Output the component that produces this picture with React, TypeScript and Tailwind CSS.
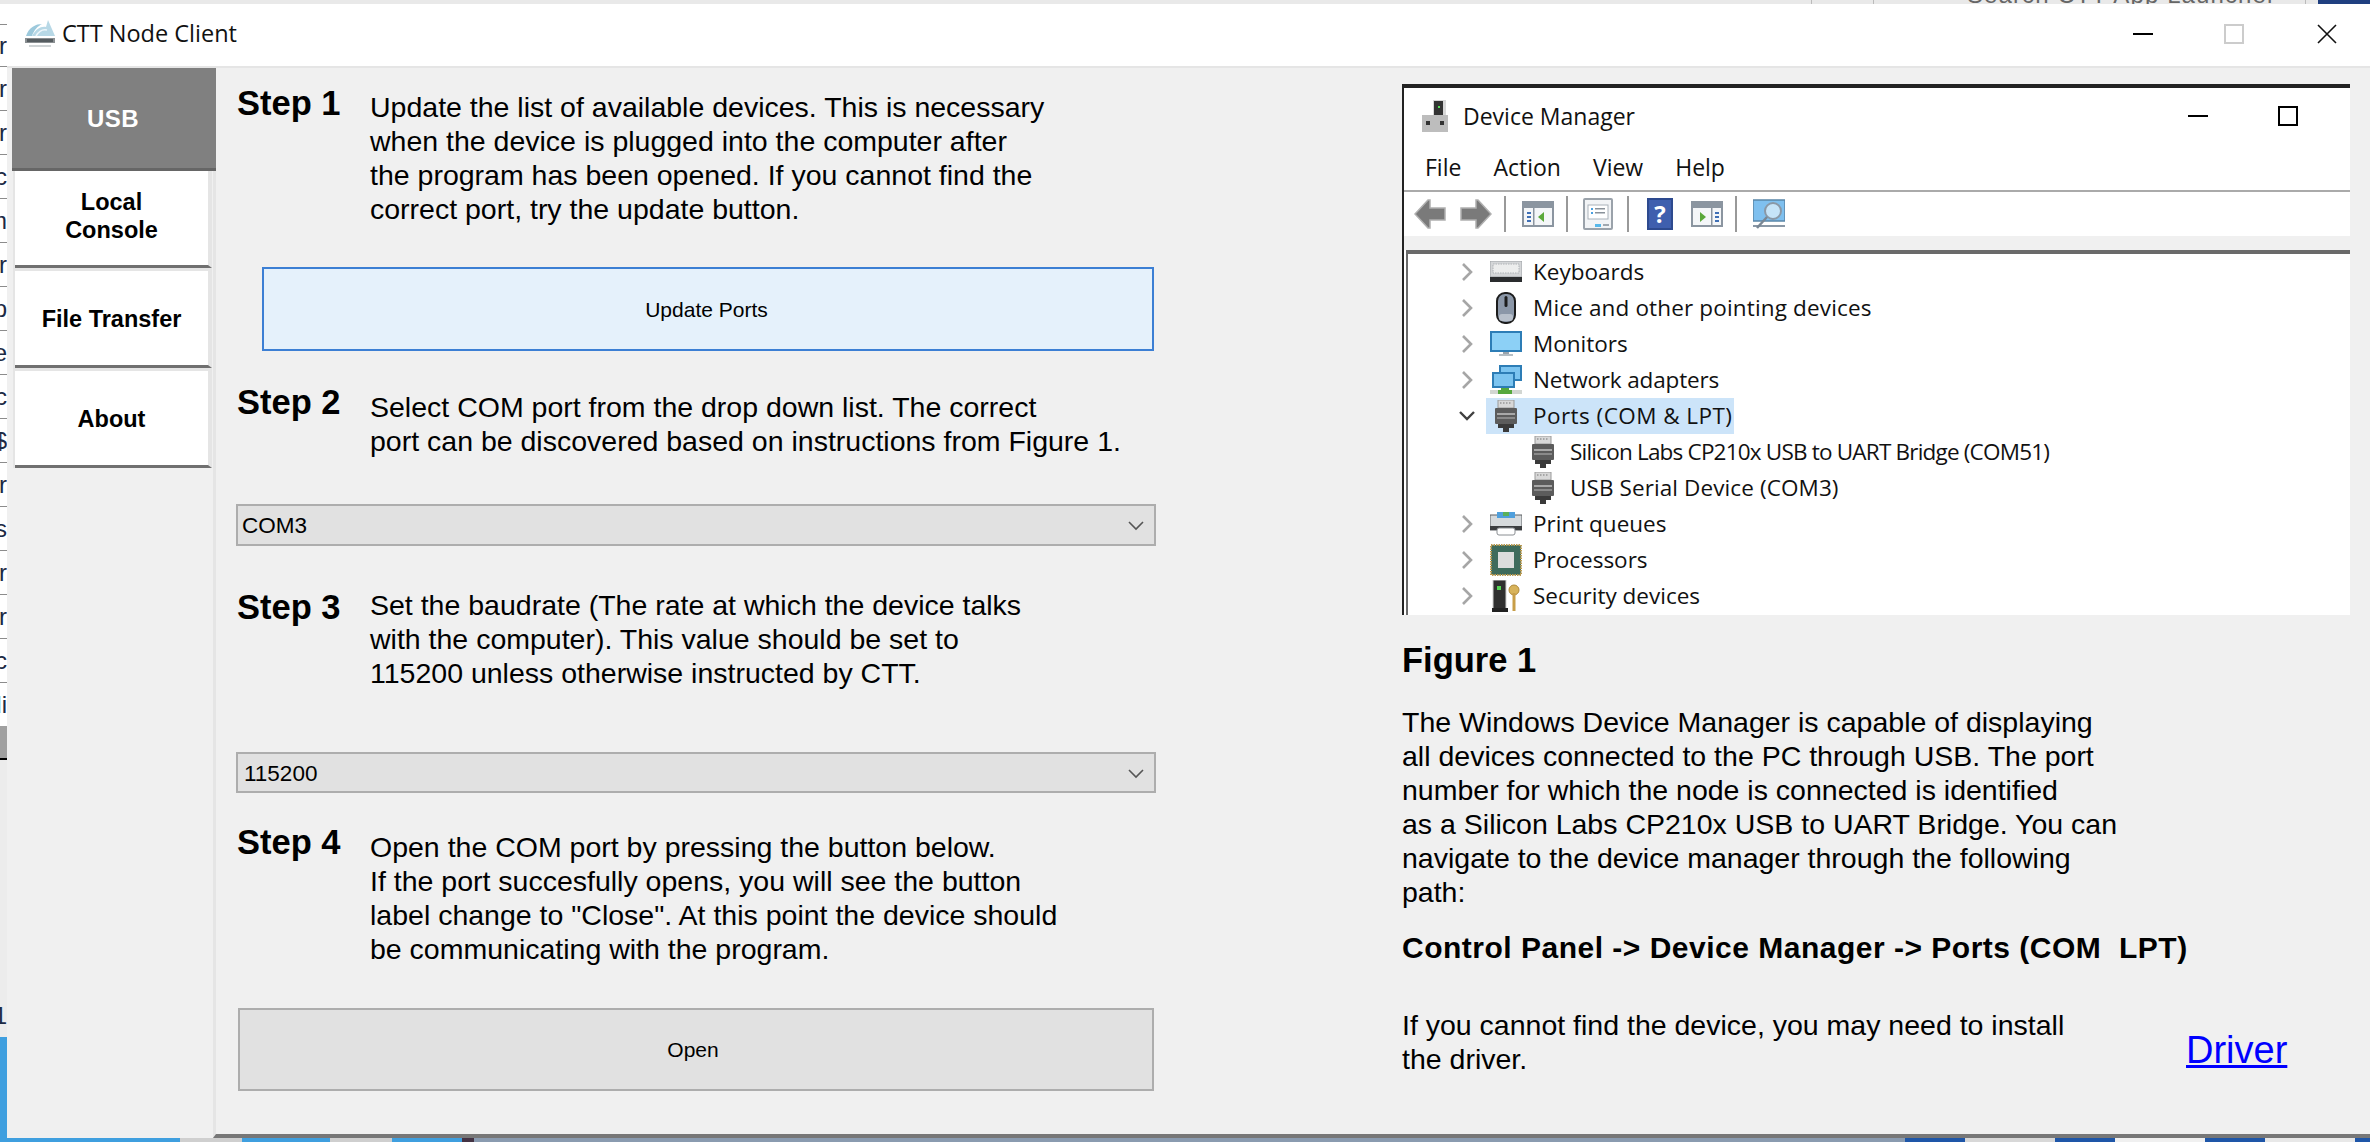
import React from "react";

const stripRows = [
  { t: "ar", c: "h-[42px]" }, { t: "or", c: "h-[44px]" }, { t: "or", c: "h-[44px]" }, { t: "c", c: "h-[44px]" },
  { t: "m", c: "h-[44px]" }, { t: "r", c: "h-[44px]" }, { t: "p", c: "h-[44px]" }, { t: "e", c: "h-[44px]" },
  { t: "c", c: "h-[44px]" }, { t: "a$", c: "h-[44px]" }, { t: "r", c: "h-[44px]" }, { t: "Es", c: "h-[44px]" },
  { t: "ar", c: "h-[44px]" }, { t: "or", c: "h-[44px]" }, { t: "Tc", c: "h-[44px]" },
];

function LeftStrip() {
  return (
    <div className="flex h-full w-[7px] shrink-0 flex-col overflow-hidden bg-white text-[24px] leading-[30px] text-[#1c2a44]">
      <div className="h-[21px] shrink-0 border-b border-[#8c8c8c]" />
      {stripRows.map((r, i) => (
        <div key={i} className={`flex shrink-0 items-center justify-end overflow-hidden whitespace-nowrap border-b border-[#8c8c8c] ${r.c}`}>
          {r.t}
        </div>
      ))}
      <div className="flex h-[43px] shrink-0 items-center justify-end overflow-hidden">di</div>
      <div className="h-[34px] shrink-0 border-b-2 border-black bg-[#a0a0a0]" />
      <div className="flex h-[277px] shrink-0 items-end justify-end overflow-hidden bg-[#ececec] pb-[6px]">1</div>
      <div className="flex-1 bg-[#3f9fdf]" />
    </div>
  );
}

function TopStrip() {
  return (
    <div className="flex h-[4px] w-full shrink-0 items-end overflow-hidden bg-[#e9e9e9]">
      <div className="h-full w-[1811px] shrink-0" />
      <div className="h-full w-px shrink-0 bg-[#bbbbbb]" />
      <div className="h-full w-[61px] shrink-0" />
      <div className="h-full w-px shrink-0 bg-[#bbbbbb]" />
      <div className="h-[30px] w-[431px] shrink-0 translate-y-[6px] whitespace-nowrap pl-[93px] text-[24px] leading-[30px] tracking-[1.1px] text-[#666666]">
        Search CTT App Launcher
      </div>
      <div className="h-full w-px shrink-0 bg-[#bbbbbb]" />
      <div className="h-full w-[12px] shrink-0" />
      <div className="h-full flex-1 bg-[#1f3f80]" />
    </div>
  );
}

const bottomSegs = [
  "w-[180px] bg-[#3f9fdf]", "w-[62px] bg-[#cfcfcf]", "w-[88px] bg-[#3f9fdf]", "w-[62px] bg-[#cfcfcf]",
  "w-[70px] bg-[#3f9fdf]", "w-[12px] bg-[#443344]", "w-[1431px] bg-[#8a9bb0]", "w-[60px] bg-[#1e56a8]",
  "w-[90px] bg-[#d8d8d8]", "w-[60px] bg-[#1e56a8]", "w-[90px] bg-[#f0f0f0]", "w-[60px] bg-[#1e56a8]",
  "w-[90px] bg-[#e8e8e8]", "w-[15px] bg-[#1e56a8]",
];

function BottomStrip() {
  return (
    <div className="flex h-[4px] w-full shrink-0 overflow-hidden">
      {bottomSegs.map((s, i) => (
        <div key={i} className={`h-full shrink-0 ${s}`} />
      ))}
    </div>
  );
}

function Logo() {
  return (
    <svg width="32" height="30" viewBox="0 0 32 30" className="shrink-0">
      <path d="M2 17 C5 8 12 5 18 5 C14 7 10 11 8 17 Z" fill="#9cc9dc" />
      <path d="M8 17 C12 10 17 7 22 8 L24 1 L31 17 Z" fill="#b7d8e6" />
      <path d="M12 17 C15 12 19 10 23 11" stroke="#eef6fa" strokeWidth="1.6" fill="none" />
      <rect x="1" y="19" width="30" height="5" fill="#8a8f92" />
      <rect x="3" y="20" width="26" height="3" fill="#555c60" />
      <rect x="5" y="26" width="22" height="2" fill="#cfd4d6" />
    </svg>
  );
}

function TitleBar() {
  return (
    <div className="flex h-[64px] shrink-0 items-center border-b-2 border-[#e5e5e5] bg-white pl-[17px] pb-[2px]">
      <Logo />
      <span className="ml-[6px] whitespace-nowrap [font-family:'Open_Sans',sans-serif] text-[23.5px] text-[#111111]">CTT Node Client</span>
      <div className="flex-1" />
      <div className="h-[2px] w-[20px] bg-black" />
      <div className="ml-[71px] h-[20px] w-[20px] border-2 border-[#cccccc]" />
      <svg width="20" height="20" viewBox="0 0 20 20" className="ml-[73px] mr-[33px]">
        <path d="M1 1 L19 19 M19 1 L1 19" stroke="#111" strokeWidth="1.6" />
      </svg>
    </div>
  );
}

function Sidebar() {
  const tab = "flex h-[97px] w-[197px] shrink-0 flex-col items-center justify-center border-b-[3px] border-r-4 border-[#e5e5e5] border-b-[#707070] bg-white text-center text-[23.5px] font-bold leading-[28px] text-black";
  return (
    <div className="flex w-[206px] shrink-0 flex-col bg-[#f0f0f0]">
      <div className="relative z-10 ml-[5px] flex h-[103px] w-[204px] shrink-0 items-center justify-center border-b-[3px] border-[#666666] bg-[#808080] pt-[2px] pr-[2px] text-[24px] font-bold tracking-[0.5px] text-white">
        USB
      </div>
      <div className="ml-[6px] flex w-[199px] flex-col gap-[3px] border-l-2 border-[#e5e5e5] bg-[#e5e5e5]">
        <div className={`${tab} pb-[4px]`}>
          <span>Local</span>
          <span>Console</span>
        </div>
        <div className={`${tab} pt-[2px]`}>File Transfer</div>
        <div className={`${tab} pt-[2px]`}>About</div>
      </div>
    </div>
  );
}

function Title({ children, className }: { children: React.ReactNode; className: string }) {
  return <div className={`ml-[1px] w-[133px] shrink-0 whitespace-nowrap text-[34.5px] font-bold leading-[34px] ${className}`}>{children}</div>;
}

function Lines({ lines, className = "" }: { lines: string[]; className?: string }) {
  return (
    <div className={`whitespace-nowrap text-[28.5px] leading-[34px] ${className}`}>
      {lines.map((l, i) => (
        <div key={i}>{l}</div>
      ))}
    </div>
  );
}

function Combo({ value, className }: { value: string; className: string }) {
  return (
    <div className={`ml-[20px] flex w-[920px] items-center justify-between border-2 border-[#adadad] bg-[#e1e1e1] pr-[10px] pt-[2px] text-[22.5px] text-black ${className}`}>
      <span>{value}</span>
      <svg width="16" height="10" viewBox="0 0 16 10">
        <path d="M1 1 L8 8 L15 1" stroke="#555" strokeWidth="1.6" fill="none" />
      </svg>
    </div>
  );
}

function Steps() {
  return (
    <div className="flex w-[1186px] shrink-0 flex-col">
      <div className="mt-[22px] flex pl-[20px]">
        <Title className="-mt-[4px]">Step 1</Title>
        <Lines lines={["Update the list of available devices. This is necessary", "when the device is plugged into the computer after", "the program has been opened. If you cannot find the", "correct port, try the update button."]} />
      </div>
      <div className="ml-[46px] mt-[41px] flex h-[84px] w-[892px] items-center justify-center border-2 border-[#3c7fd4] bg-[#e5f1fb] pt-[2px] pr-[3px] text-[21px] text-black">
        Update Ports
      </div>
      <div className="mt-[39px] flex pl-[20px]">
        <Title className="-mt-[5px]">Step 2</Title>
        <Lines lines={["Select COM port from the drop down list. The correct", "port can be discovered based on instructions from Figure 1."]} />
      </div>
      <Combo value="COM3" className="mt-[46px] h-[42px] pl-[4px]" />
      <div className="mt-[42px] flex pl-[20px]">
        <Title className="mt-[2px]">Step 3</Title>
        <Lines className="leading-[34.5px]" lines={["Set the baudrate (The rate at which the device talks", "with the computer). This value should be set to", "115200 unless otherwise instructed by CTT."]} />
      </div>
      <Combo value="115200" className="mt-[62px] h-[41px] pl-[6px]" />
      <div className="mt-[37px] flex pl-[20px]">
        <Title className="-mt-[5px]">Step 4</Title>
        <Lines lines={["Open the COM port by pressing the button below.", "If the port succesfully opens, you will see the button", "label change to \"Close\". At this point the device should", "be communicating with the program."]} />
      </div>
      <div className="ml-[22px] mt-[42px] flex h-[83px] w-[916px] items-center justify-center border-2 border-[#adadad] bg-[#e1e1e1] pr-[6px] text-[21px] text-black">
        Open
      </div>
    </div>
  );
}

/* ---------- device manager drawings ---------- */
function DevMgrIcon() {
  return (
    <svg width="26" height="32" viewBox="0 0 26 32" className="shrink-0">
      <rect x="11" y="0" width="13" height="15" fill="#d8d8d8" />
      <rect x="12" y="1" width="9" height="14" fill="#333" />
      <rect x="16" y="6" width="2" height="2" fill="#55e055" />
      <rect x="0" y="15" width="26" height="17" fill="#bdbdbd" />
      <rect x="4" y="21" width="4" height="4" fill="#333" />
      <rect x="18" y="21" width="4" height="4" fill="#333" />
    </svg>
  );
}

function ArrowIcon({ dir }: { dir: "l" | "r" }) {
  return (
    <svg width="32" height="30" viewBox="0 0 32 30" className={`shrink-0 ${dir === "r" ? "rotate-180" : ""}`}>
      <path d="M1 15 L14 1 L16 1 L16 9 L31 9 L31 21 L16 21 L16 29 L14 29 Z" fill="#7a7a7a" stroke="#b0b0b0" strokeWidth="1.5" />
    </svg>
  );
}

function Sep({ className }: { className: string }) {
  return <div className={`h-[36px] w-[2px] shrink-0 bg-[#999999] ${className}`} />;
}

function PaneIcon({ flip, className }: { flip?: boolean; className: string }) {
  return (
    <svg width="32" height="26" viewBox="0 0 32 26" className={`shrink-0 ${className}`}>
      <rect x="1" y="1" width="30" height="24" fill="#f4f6f8" stroke="#8b95a0" strokeWidth="2" />
      <rect x="1" y="1" width="30" height="6" fill="#8b95a0" />
      <rect x={flip ? 20 : 11} y="7" width="1.5" height="18" fill="#8b95a0" />
      <rect x={flip ? 24 : 5} y="11" width="4" height="2" fill="#3f6fb5" />
      <rect x={flip ? 24 : 5} y="15" width="4" height="2" fill="#3f6fb5" />
      <rect x={flip ? 24 : 5} y="19" width="4" height="2" fill="#3f6fb5" />
      {flip ? <path d="M9 11 L15 16 L9 21 Z" fill="#5aa83a" /> : <path d="M22 11 L16 16 L22 21 Z" fill="#5aa83a" />}
    </svg>
  );
}

function PropIcon({ className }: { className: string }) {
  return (
    <svg width="30" height="32" viewBox="0 0 30 32" className={`shrink-0 ${className}`}>
      <rect x="1" y="1" width="28" height="30" rx="1" fill="#f2f4f6" stroke="#9aa2aa" strokeWidth="2" />
      <rect x="5" y="7" width="20" height="14" fill="#fff" stroke="#aab2ba" />
      <rect x="8" y="10" width="2" height="2" fill="#4aa0e0" />
      <rect x="12" y="10" width="10" height="1.5" fill="#8a929a" />
      <rect x="8" y="14" width="2" height="2" fill="#4aa0e0" />
      <rect x="12" y="14" width="10" height="1.5" fill="#8a929a" />
      <rect x="12" y="26" width="6" height="3" fill="#58b8ea" />
      <rect x="20" y="26" width="6" height="2" fill="#a0a8b0" />
    </svg>
  );
}

function HelpIcon({ className }: { className: string }) {
  return (
    <div className={`flex h-[32px] w-[26px] shrink-0 items-center justify-center border-2 border-[#2d4a8f] bg-[#3f5fae] text-[24px] font-bold leading-none text-white ${className}`}>
      ?
    </div>
  );
}

function ScanIcon({ className }: { className: string }) {
  return (
    <svg width="32" height="30" viewBox="0 0 32 30" className={`shrink-0 ${className}`}>
      <rect x="0" y="1" width="32" height="21" fill="#7fc0ef" stroke="#5a86a8" strokeWidth="1.5" />
      <rect x="0" y="26" width="32" height="2" fill="#8a98a6" />
      <circle cx="20" cy="12" r="8" fill="#c6e4f8" stroke="#8a98a6" strokeWidth="2" />
      <path d="M14 18 L4 29" stroke="#7a8794" strokeWidth="2.5" />
    </svg>
  );
}

function KeyboardIcon() {
  return (
    <svg width="32" height="22" viewBox="0 0 32 22">
      <rect x="0" y="0" width="32" height="16" fill="#d4d6d8" stroke="#9ea2a6" />
      <rect x="3" y="3" width="26" height="9" fill="#eceded" stroke="#aeb2b6" strokeDasharray="1.5 1" />
      <rect x="0" y="16" width="32" height="5" fill="#2a2c2e" />
    </svg>
  );
}
function MouseIcon() {
  return (
    <svg width="20" height="32" viewBox="0 0 20 32">
      <rect x="1" y="1" width="18" height="30" rx="8" fill="#8b97a8" stroke="#1c1c1c" strokeWidth="2" />
      <rect x="8.5" y="4" width="3" height="11" rx="1.5" fill="#1c1c1c" />
      <rect x="3" y="22" width="14" height="7" rx="3" fill="#b8c0cb" />
    </svg>
  );
}
function MonitorIcon() {
  return (
    <svg width="32" height="26" viewBox="0 0 32 26">
      <rect x="1" y="1" width="30" height="19" fill="#8cd0f6" stroke="#2d7db6" strokeWidth="2" />
      <rect x="13" y="21" width="6" height="2" fill="#9aa4ac" />
      <rect x="9" y="23" width="14" height="2" fill="#b6bec4" />
    </svg>
  );
}
function NetworkIcon() {
  return (
    <svg width="32" height="30" viewBox="0 0 32 30">
      <rect x="10" y="1" width="21" height="14" fill="#7cc4f0" stroke="#2d7db6" strokeWidth="2" />
      <rect x="3" y="8" width="21" height="14" fill="#7cc4f0" stroke="#2d7db6" strokeWidth="2" />
      <rect x="0" y="25" width="32" height="4" fill="#d2d6d2" />
      <path d="M11 23 H19 V25 H22 V29 H8 V25 H11 Z" fill="#55a83e" />
    </svg>
  );
}
function PortIcon() {
  return (
    <svg width="22" height="32" viewBox="0 0 22 32" className="shrink-0">
      <rect x="3" y="0" width="16" height="8" fill="#d8d8d8" stroke="#9a9a9a" />
      <path d="M5 3 H17" stroke="#777" strokeDasharray="1.5 1.5" />
      <rect x="0" y="8" width="22" height="16" rx="1" fill="#5c5c5c" />
      <rect x="2" y="13" width="18" height="2" fill="#a8a8a8" />
      <rect x="2" y="17" width="18" height="2" fill="#8a8a8a" />
      <rect x="3" y="24" width="5" height="4" fill="#3a3a3a" />
      <rect x="14" y="24" width="5" height="4" fill="#3a3a3a" />
      <rect x="8" y="24" width="6" height="8" fill="#3a3a3a" />
    </svg>
  );
}
function PrinterIcon() {
  return (
    <svg width="32" height="24" viewBox="0 0 32 24">
      <rect x="0" y="3" width="32" height="15" fill="#d6dadc" stroke="#5a5e62" />
      <rect x="7" y="0" width="18" height="6" fill="#4f9fdc" />
      <rect x="13" y="0" width="6" height="4" fill="#5ab05a" />
      <rect x="0" y="14" width="32" height="4" fill="#3c3e40" />
      <rect x="7" y="16" width="18" height="7" rx="2" fill="#fff" stroke="#8a8e92" />
    </svg>
  );
}
function CpuIcon() {
  return (
    <svg width="32" height="32" viewBox="0 0 32 32">
      <rect x="1" y="1" width="30" height="30" fill="#3e6b5c" stroke="#b89a52" strokeWidth="2" strokeDasharray="1.5 1" />
      <rect x="3" y="3" width="26" height="26" fill="#3e6b5c" />
      <rect x="8" y="8" width="16" height="16" fill="#dcdcdc" />
    </svg>
  );
}
function SecurityIcon() {
  return (
    <svg width="28" height="32" viewBox="0 0 28 32">
      <rect x="1" y="0" width="13" height="29" fill="#2f2f2f" stroke="#cfcfcf" />
      <rect x="5" y="6" width="4" height="4" fill="#54d454" />
      <rect x="0" y="28" width="16" height="4" fill="#222" />
      <circle cx="22" cy="10" r="5" fill="#d8b35a" stroke="#b08a3a" />
      <rect x="20.5" y="13" width="3" height="18" fill="#c89e48" />
    </svg>
  );
}

function Chevron({ open }: { open?: boolean }) {
  return open ? (
    <svg width="18" height="12" viewBox="0 0 18 12">
      <path d="M2 2 L9 9 L16 2" stroke="#404040" strokeWidth="2.4" fill="none" />
    </svg>
  ) : (
    <svg width="13" height="20" viewBox="0 0 13 20">
      <path d="M2 2 L10 10 L2 18" stroke="#a6a6a6" strokeWidth="2.6" fill="none" />
    </svg>
  );
}

function TreeRow({ icon, label, selected, open, className = "" }: { icon: React.ReactNode; label: string; selected?: boolean; open?: boolean; className?: string }) {
  return (
    <div className="flex h-[36px] shrink-0 items-center pl-[50px]">
      <div className="flex w-[18px] shrink-0 justify-center"><Chevron open={open} /></div>
      <div className={`ml-[10px] flex h-[36px] items-center pl-[3px] pr-[2px] ${selected ? "bg-[#cce4f9]" : ""}`}>
        <div className="flex w-[33px] shrink-0 justify-center">{icon}</div>
        <span className={`ml-[11px] whitespace-nowrap ${className}`}>{label}</span>
      </div>
    </div>
  );
}

function ChildRow({ label, className = "" }: { label: string; className?: string }) {
  return (
    <div className="flex h-[36px] shrink-0 items-center pl-[124px]">
      <PortIcon />
      <span className={`ml-[16px] whitespace-nowrap ${className}`}>{label}</span>
    </div>
  );
}

function DeviceManager() {
  return (
    <div className="mt-[16px] flex h-[531px] flex-col overflow-hidden border-l-2 border-t-4 border-[#222222] bg-white [font-family:'Open_Sans',sans-serif] text-[22.5px] text-[#111111]">
      <div className="flex h-[56px] shrink-0 items-center pl-[18px]">
        <DevMgrIcon />
        <span className="ml-[15px] whitespace-nowrap text-[23px]">Device Manager</span>
        <div className="flex-1" />
        <div className="h-[2px] w-[20px] bg-black" />
        <div className="ml-[70px] mr-[52px] h-[20px] w-[20px] border-2 border-black" />
      </div>
      <div className="flex h-[46px] shrink-0 items-center gap-[32px] pl-[21px] text-[23px]">
        <span>File</span>
        <span>Action</span>
        <span>View</span>
        <span>Help</span>
      </div>
      <div className="flex h-[46px] shrink-0 items-center border-t-2 border-[#aaaaaa] pl-[10px]">
        <ArrowIcon dir="l" />
        <div className="ml-[14px]"><ArrowIcon dir="r" /></div>
        <Sep className="ml-[12px]" />
        <PaneIcon className="ml-[16px]" />
        <Sep className="ml-[12px]" />
        <PropIcon className="ml-[15px]" />
        <Sep className="ml-[14px]" />
        <HelpIcon className="ml-[18px]" />
        <PaneIcon flip className="ml-[18px]" />
        <Sep className="ml-[12px]" />
        <ScanIcon className="ml-[16px]" />
      </div>
      <div className="h-[14px] shrink-0 bg-[#f0f0f0]" />
      <div className="ml-[2px] flex flex-1 flex-col overflow-hidden border-l-[2px] border-t-4 border-[#6a6a6a] bg-white">
        <TreeRow icon={<KeyboardIcon />} label="Keyboards" />
        <TreeRow icon={<MouseIcon />} label="Mice and other pointing devices" className="tracking-[0.15px]" />
        <TreeRow icon={<MonitorIcon />} label="Monitors" />
        <TreeRow icon={<NetworkIcon />} label="Network adapters" className="tracking-[-0.15px]" />
        <TreeRow icon={<PortIcon />} label="Ports (COM & LPT)" selected open className="tracking-[0.45px]" />
        <ChildRow label="Silicon Labs CP210x USB to UART Bridge (COM51)" className="tracking-[-0.8px]" />
        <ChildRow label="USB Serial Device (COM3)" className="tracking-[0.1px]" />
        <TreeRow icon={<PrinterIcon />} label="Print queues" />
        <TreeRow icon={<CpuIcon />} label="Processors" />
        <TreeRow icon={<SecurityIcon />} label="Security devices" />
      </div>
    </div>
  );
}

function Figure() {
  return (
    <div className="flex w-[948px] shrink-0 flex-col">
      <DeviceManager />
      <div className="mt-[25px] text-[34.5px] font-bold leading-[40px]">Figure 1</div>
      <Lines
        className="mt-[25px] text-[28.3px]"
        lines={["The Windows Device Manager is capable of displaying", "all devices connected to the PC through USB. The port", "number for which the node is connected is identified", "as a Silicon Labs CP210x USB to UART Bridge. You can", "navigate to the device manager through the following", "path:"]}
      />
      <div className="mt-[22px] whitespace-nowrap text-[30px] font-bold leading-[34px] tracking-[0.5px]">Control Panel -&gt; Device Manager -&gt; Ports (COM&nbsp; LPT)</div>
      <div className="mt-[43px] flex">
        <Lines className="w-[784px] text-[28.3px]" lines={["If you cannot find the device, you may need to install", "the driver."]} />
        <span className="mt-[21px] text-[38px] leading-[42px] text-[#0000ff] underline">Driver</span>
      </div>
    </div>
  );
}

export default function App() {
  return (
    <div className="flex h-[1142px] w-[2370px] flex-col overflow-hidden bg-white [font-family:'Liberation_Sans',Arial,sans-serif] text-black">
      <TopStrip />
      <div className="flex h-[1134px] shrink-0">
        <LeftStrip />
        <div className="flex flex-1 flex-col overflow-hidden">
          <TitleBar />
          <div className="flex min-h-0 flex-1 bg-[#f0f0f0]">
            <Sidebar />
            <div className="flex flex-1 border-b-4 border-l-[3px] border-b-[#777777] border-l-[#e5e5e5]">
              <Steps />
              <Figure />
            </div>
          </div>
        </div>
      </div>
      <BottomStrip />
    </div>
  );
}
